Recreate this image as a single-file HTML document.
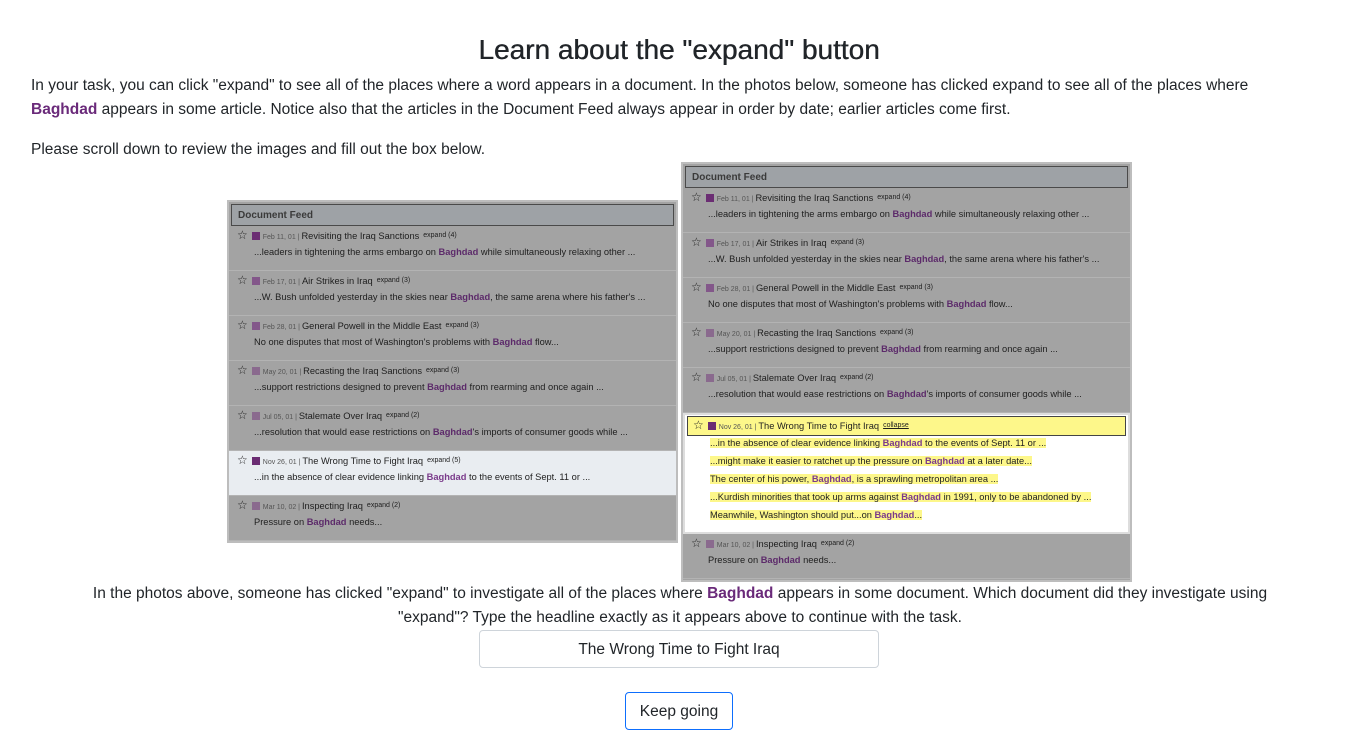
<!DOCTYPE html><html><head><meta charset="utf-8"><style>
body{margin:0;width:1366px;height:756px;background:#fff;font-family:"Liberation Sans",sans-serif;color:#212529;position:relative;overflow:hidden}
h1{position:absolute;top:32px;left:0;width:1358px;text-align:center;margin:0;font-size:28px;font-weight:normal;line-height:36px;text-shadow:0.4px 0 0 #212529}
.p{position:absolute;left:31px;font-size:15.5px;line-height:24px;margin:0;width:1300px}
b.g{color:#6a2a7a;font-weight:bold}
.img{position:absolute;background:#a3a3a3;border:2px solid #bdbdbd;box-sizing:border-box;overflow:hidden}
.hd{position:absolute;left:2px;right:2px;height:22px;background:#9ea2a6;border:1px solid #4a4a4a;box-sizing:border-box;font-size:10px;font-weight:bold;color:#3a3a3a;padding:5px 6px}
.row{position:absolute;left:0;right:0;height:45px;border-bottom:1px solid #b3b3b3;box-sizing:border-box;font-size:9.3px;color:#1e1e1e}
.t{position:absolute;left:8px;top:2px;white-space:nowrap}
.t .s{font-size:12px;color:#222;margin-right:4px}
.t .sq{display:inline-block;width:8px;height:8px;background:#6b2d73;vertical-align:-1px;margin-right:3px}
.t .d{font-size:7px;color:#555}
.t .e{font-size:7px;margin-left:4px;vertical-align:2px}
.sn{position:absolute;left:25px;top:21px;white-space:nowrap}
.sn b{color:#5c2a6a}
.yl{background:#fdf78a}
.input{position:absolute;left:479px;top:630px;width:400px;height:38px;border:1px solid #ced4da;border-radius:4px;box-sizing:border-box;font-size:15.5px;text-align:center;line-height:38px}
.btn{position:absolute;left:625px;top:692px;width:108px;height:38px;border:1px solid #0d6efd;border-radius:4px;box-sizing:border-box;font-size:15.5px;text-align:center;line-height:38px}
</style></head><body>
<h1>Learn about the "expand" button</h1>
<p class="p" style="top:74px;width:1265px">In your task, you can click "expand" to see all of the places where a word appears in a document. In the photos below, someone has clicked expand to see all of the places where <b class="g">Baghdad</b> appears in some article. Notice also that the articles in the Document Feed always appear in order by date; earlier articles come first.</p>
<p class="p" style="top:138px">Please scroll down to review the images and fill out the box below.</p>

<div class="img" style="left:227px;top:200px;width:451px;height:343px">
<div class="hd" style="top:2px">Document Feed</div>
<div class="row" style="top:24px"><div class="t"><span class="s">☆</span><span class="sq"></span><span class="d">Feb 11, 01 | </span>Revisiting the Iraq Sanctions<span class="e">expand (4)</span></div><div class="sn">...leaders in tightening the arms embargo on <b>Baghdad</b> while simultaneously relaxing other ...</div></div>
<div class="row" style="top:69px"><div class="t"><span class="s">☆</span><span class="sq" style="background:#83578a"></span><span class="d">Feb 17, 01 | </span>Air Strikes in Iraq<span class="e">expand (3)</span></div><div class="sn">...W. Bush unfolded yesterday in the skies near <b>Baghdad</b>, the same arena where his father's ...</div></div>
<div class="row" style="top:114px"><div class="t"><span class="s">☆</span><span class="sq" style="background:#83578a"></span><span class="d">Feb 28, 01 | </span>General Powell in the Middle East<span class="e">expand (3)</span></div><div class="sn">No one disputes that most of Washington's problems with <b>Baghdad</b> flow...</div></div>
<div class="row" style="top:159px"><div class="t"><span class="s">☆</span><span class="sq" style="background:#8a6a8e"></span><span class="d">May 20, 01 | </span>Recasting the Iraq Sanctions<span class="e">expand (3)</span></div><div class="sn">...support restrictions designed to prevent <b>Baghdad</b> from rearming and once again ...</div></div>
<div class="row" style="top:204px"><div class="t"><span class="s">☆</span><span class="sq" style="background:#8a6a8e"></span><span class="d">Jul 05, 01 | </span>Stalemate Over Iraq<span class="e">expand (2)</span></div><div class="sn">...resolution that would ease restrictions on <b>Baghdad</b>'s imports of consumer goods while ...</div></div>
<div class="row" style="top:249px;background:#e9edf1"><div class="t"><span class="s">☆</span><span class="sq"></span><span class="d">Nov 26, 01 | </span>The Wrong Time to Fight Iraq<span class="e">expand (5)</span></div><div class="sn">...in the absence of clear evidence linking <b style="color:#7a3a8a">Baghdad</b> to the events of Sept. 11 or ...</div></div>
<div class="row" style="top:294px"><div class="t"><span class="s">☆</span><span class="sq" style="background:#8a6a8e"></span><span class="d">Mar 10, 02 | </span>Inspecting Iraq<span class="e">expand (2)</span></div><div class="sn">Pressure on <b>Baghdad</b> needs...</div></div>
</div>

<div class="img" style="left:681px;top:162px;width:451px;height:420px">
<div class="hd" style="top:2px">Document Feed</div>
<div class="row" style="top:24px"><div class="t"><span class="s">☆</span><span class="sq"></span><span class="d">Feb 11, 01 | </span>Revisiting the Iraq Sanctions<span class="e">expand (4)</span></div><div class="sn">...leaders in tightening the arms embargo on <b>Baghdad</b> while simultaneously relaxing other ...</div></div>
<div class="row" style="top:69px"><div class="t"><span class="s">☆</span><span class="sq" style="background:#83578a"></span><span class="d">Feb 17, 01 | </span>Air Strikes in Iraq<span class="e">expand (3)</span></div><div class="sn">...W. Bush unfolded yesterday in the skies near <b>Baghdad</b>, the same arena where his father's ...</div></div>
<div class="row" style="top:114px"><div class="t"><span class="s">☆</span><span class="sq" style="background:#83578a"></span><span class="d">Feb 28, 01 | </span>General Powell in the Middle East<span class="e">expand (3)</span></div><div class="sn">No one disputes that most of Washington's problems with <b>Baghdad</b> flow...</div></div>
<div class="row" style="top:159px"><div class="t"><span class="s">☆</span><span class="sq" style="background:#8a6a8e"></span><span class="d">May 20, 01 | </span>Recasting the Iraq Sanctions<span class="e">expand (3)</span></div><div class="sn">...support restrictions designed to prevent <b>Baghdad</b> from rearming and once again ...</div></div>
<div class="row" style="top:204px"><div class="t"><span class="s">☆</span><span class="sq" style="background:#8a6a8e"></span><span class="d">Jul 05, 01 | </span>Stalemate Over Iraq<span class="e">expand (2)</span></div><div class="sn">...resolution that would ease restrictions on <b>Baghdad</b>'s imports of consumer goods while ...</div></div>
<div class="row" style="top:249px;height:121px;background:#fff;border:2px solid #ddd">
 <div style="position:absolute;left:2px;right:2px;top:1px;height:20px;background:#fdf78a;border:1px solid #444;box-sizing:border-box"></div>
 <div class="t" style="top:3px"><span class="s">☆</span><span class="sq"></span><span class="d">Nov 26, 01 | </span>The Wrong Time to Fight Iraq<span class="e" style="text-decoration:underline">collapse</span></div>
 <div class="sn" style="top:23px"><span class="yl">...in the absence of clear evidence linking <b style="color:#7a3a8a">Baghdad</b> to the events of Sept. 11 or ...</span></div>
 <div class="sn" style="top:41px"><span class="yl">...might make it easier to ratchet up the pressure on <b style="color:#7a3a8a">Baghdad</b> at a later date...</span></div>
 <div class="sn" style="top:59px"><span class="yl">The center of his power, <b style="color:#7a3a8a">Baghdad</b>, is a sprawling metropolitan area ...</span></div>
 <div class="sn" style="top:77px"><span class="yl">...Kurdish minorities that took up arms against <b style="color:#7a3a8a">Baghdad</b> in 1991, only to be abandoned by ...</span></div>
 <div class="sn" style="top:95px"><span class="yl">Meanwhile, Washington should put...on <b style="color:#7a3a8a">Baghdad</b>...</span></div>
</div>
<div class="row" style="top:370px"><div class="t"><span class="s">☆</span><span class="sq" style="background:#8a6a8e"></span><span class="d">Mar 10, 02 | </span>Inspecting Iraq<span class="e">expand (2)</span></div><div class="sn">Pressure on <b>Baghdad</b> needs...</div></div>
</div>

<p class="p" style="top:582px;left:60px;width:1240px;text-align:center">In the photos above, someone has clicked "expand" to investigate all of the places where <b class="g">Baghdad</b> appears in some document. Which document did they investigate using "expand"? Type the headline exactly as it appears above to continue with the task.</p>
<div class="input">The Wrong Time to Fight Iraq</div>
<div class="btn">Keep going</div>
</body></html>
